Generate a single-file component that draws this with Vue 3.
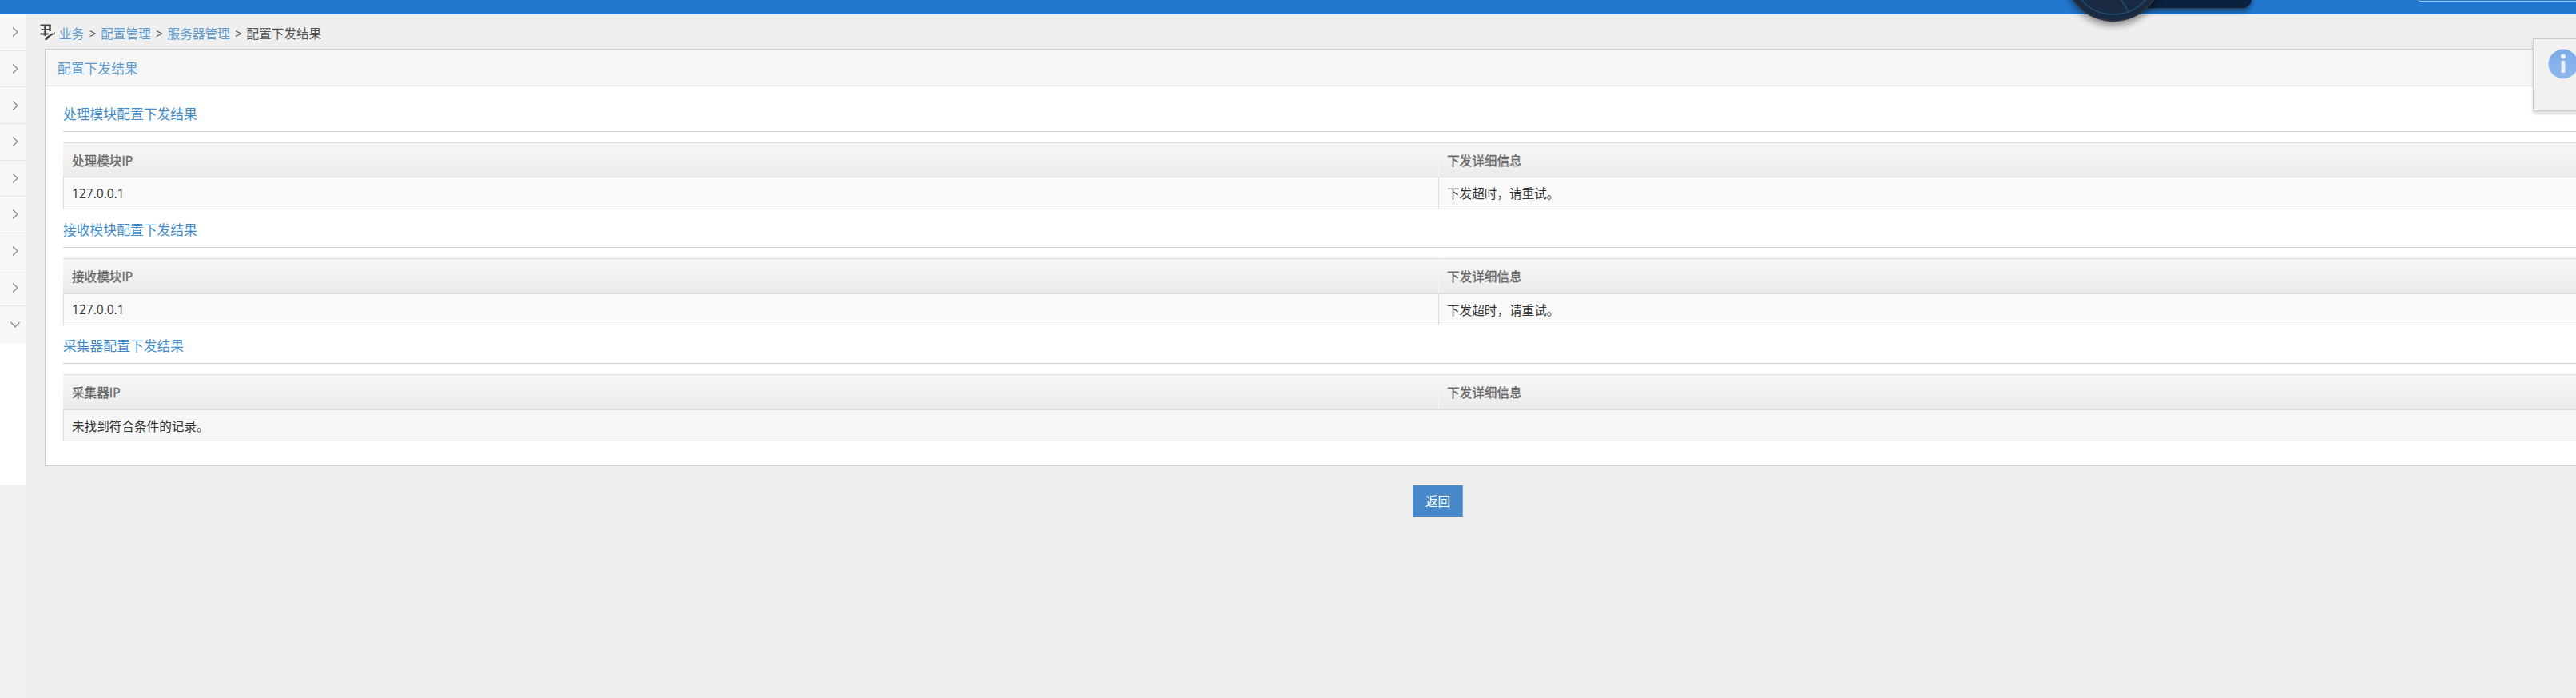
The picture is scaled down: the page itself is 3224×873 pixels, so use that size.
<script setup>
const navCount = 8
const sections = [
  { title: '处理模块配置下发结果', col: '处理模块IP', ip: '127.0.0.1', msg: '下发超时，请重试。' },
  { title: '接收模块配置下发结果', col: '接收模块IP', ip: '127.0.0.1', msg: '下发超时，请重试。', thick: true },
  { title: '采集器配置下发结果', col: '采集器IP', empty: '未找到符合条件的记录。', thick: true },
]
</script>

<template>
  <div class="page">
    <header class="topbar">
      <div class="badge-bar"></div>
      <svg class="badge" width="130" height="130" viewBox="0 0 130 130">
        <circle cx="65" cy="65" r="61" fill="#1a2a42" stroke="#2b3440" stroke-width="2" />
        <circle cx="65" cy="65" r="53" fill="none" stroke="#1f4f70" stroke-width="1.500" />
        <path d="M60 82l8 8 11 16 4 8" fill="none" stroke="#1f4f70" stroke-width="1.500" />
      </svg>
      <div class="search-edge"></div>
    </header>
    <div class="shell">
      <div class="rail">
        <aside class="side">
          <div v-for="n in navCount" :key="n" class="nav-item">
            <svg width="10" height="14" viewBox="0 0 10 14"><path d="M2 1.500 8 7l-6 5.500" fill="none" stroke="#8a8a8a" stroke-width="1.300" /></svg>
          </div>
          <div class="nav-item last">
            <svg width="14" height="10" viewBox="0 0 14 10"><path d="M1.500 2 7 8l5.500-6" fill="none" stroke="#8a8a8a" stroke-width="1.300" /></svg>
          </div>
        </aside>
      </div>
      <main class="main">
        <nav class="crumbs">
          <svg class="crumb-icon" width="19" height="20" viewBox="0 0 19 20">
            <path d="M0.500 1.500h13M1.500 7h11M0.500 12.500h10" fill="none" stroke="#444" stroke-width="2.200" />
            <path d="M6.500 1v14M12.500 1v8" fill="none" stroke="#444" stroke-width="2.400" />
            <path d="M18.500 9.500l-2 2.500-1.500-.500L7 17l-1 3 3.500-.500 1-2 6-4.500 2 .500z" fill="#444" />
          </svg>
          <a class="link">业务</a><span class="sep">&gt;</span>
          <a class="link">配置管理</a><span class="sep">&gt;</span>
          <a class="link">服务器管理</a><span class="sep">&gt;</span>
          <span class="current">配置下发结果</span>
        </nav>
        <section class="panel">
          <h2 class="panel-head">配置下发结果</h2>
          <div class="panel-body">
            <template v-for="s in sections" :key="s.title">
              <h3 class="sec-title">{{ s.title }}</h3>
              <table class="grid" :class="{ thick: s.thick }">
                <thead>
                  <tr>
                    <th>{{ s.col }}</th>
                    <th class="second">下发详细信息</th>
                  </tr>
                </thead>
                <tbody>
                  <tr v-if="s.empty">
                    <td colspan="2" class="empty">{{ s.empty }}</td>
                  </tr>
                  <tr v-else>
                    <td>{{ s.ip }}</td>
                    <td class="second">{{ s.msg }}</td>
                  </tr>
                </tbody>
              </table>
            </template>
          </div>
        </section>
        <div class="actions">
          <button class="back" type="button">返回</button>
        </div>
      </main>
    </div>
    <div class="info-pop">
      <svg width="38" height="40" viewBox="0 0 38 40">
        <defs>
          <linearGradient id="infoFill" x1="0" y1="0" x2="0" y2="1">
            <stop offset="0" stop-color="#7cabe8" />
            <stop offset="1" stop-color="#8fb6ee" />
          </linearGradient>
        </defs>
        <circle cx="19" cy="19" r="18.500" fill="url(#infoFill)" />
        <circle cx="19" cy="9.500" r="3" fill="#eef4fc" />
        <rect x="16.500" y="15" width="5" height="15" rx="1" fill="#e6effb" />
      </svg>
    </div>
  </div>
</template>

<style>
html, body { margin: 0; background: #efefef; overflow: hidden; }
</style>

<style scoped>
.page {
  position: relative;
  width: 3224px;
  height: 873px;
  overflow: hidden;
  background: #efefef;
  font-family: "Open Sans", "Noto Sans CJK SC", sans-serif;
  font-size: 15.6px;
  color: #333;
}
.topbar {
  position: relative;
  height: 18px;
  background: #2277cf;
}
.badge {
  position: absolute;
  left: 2580px;
  top: -100px;
  filter: drop-shadow(0 5px 4px rgba(0, 0, 0, 0.4));
}
.badge-bar {
  position: absolute;
  left: 2650px;
  top: -30px;
  width: 168px;
  height: 41px;
  border-radius: 12px;
  background: #0a2240;
  border-bottom: 1px solid #33404f;
  box-sizing: border-box;
  box-shadow: 0 4px 6px rgba(0, 0, 0, 0.35);
}
.search-edge {
  position: absolute;
  left: 3026px;
  top: -10px;
  width: 400px;
  height: 12px;
  border: 1px solid #9dc2ea;
  border-radius: 3px;
  box-sizing: border-box;
}
.shell { display: flex; align-items: flex-start; }
.rail {
  width: 32px;
  height: 855px;
  flex: none;
  background: #f1f1f1;
}
.side {
  height: 588px;
  background: #fff;
  border-bottom: 1px solid #ddd;
}
.nav-item {
  height: 45.625px;
  box-sizing: border-box;
  display: flex;
  align-items: center;
  justify-content: center;
  background: #f8f8f8;
  border-bottom: 1px solid #e4e4e4;
}
.nav-item svg { margin-left: 5px; }
.nav-item.last { border-bottom: 0; }
.main {
  width: 3488px;
  flex: none;
  margin-left: 24px;
}
.crumbs {
  height: 43px;
  margin-left: -6px;
  display: flex;
  align-items: center;
  line-height: 1;
  padding-top: 6px;
  box-sizing: border-box;
}
.crumb-icon { margin-right: 5px; margin-top: -6px; }
.link { color: #5b9bd1; }
.current { color: #555; }
.sep { width: 8px; margin: 0 6.500px; color: #555; text-align: center; }
.panel {
  background: #fff;
  border: 1px solid #ccc;
}
.panel-head {
  margin: 0;
  height: 46px;
  box-sizing: border-box;
  padding-left: 15px;
  display: flex;
  align-items: center;
  background: #f6f6f6;
  border-bottom: 1px solid #ddd;
  font-size: 16.8px;
  font-weight: 400;
  color: #5b9bd1;
}
.panel-body {
  padding: 9px 22px 30px;
}
.sec-title {
  margin: 0 0 13px;
  height: 48px;
  box-sizing: border-box;
  padding-top: 3px;
  display: flex;
  align-items: center;
  border-bottom: 1px solid #ccc;
  font-size: 16.8px;
  font-weight: 400;
  color: #428bca;
}
.grid {
  width: 100%;
  table-layout: fixed;
  border-collapse: separate;
  border-spacing: 0;
}
.grid th, .grid td {
  box-sizing: border-box;
  padding: 0 10px;
  text-align: left;
}
.grid th {
  height: 44px;
  background: linear-gradient(#f7f7f7, #ebebeb);
  border-top: 1px solid #ddd;
  border-bottom: 1px solid #ddd;
  color: #666;
  font-weight: 400;
  -webkit-text-stroke: 0.35px #666;
}
.grid th:first-child { padding-left: 11px; }
.grid th.second { border-left: 1px solid #f5f5f5; }
.grid td {
  height: 40px;
  background: #f9f9f9;
  border-bottom: 1px solid #ddd;
  color: #333;
}
.grid td:first-child { border-left: 1px solid #ddd; padding-left: 10px; }
.grid td.second { border-left: 1px solid #ddd; }
.grid td.empty { background: #f6f6f6; }
.grid.thick th { height: 45px; border-bottom-width: 2px; }
.grid.thick td { height: 39px; }
.actions {
  display: flex;
  justify-content: center;
  padding: 24px 1px 0 0;
}
.back {
  width: 63px;
  height: 39px;
  padding: 0;
  background: #4688c9;
  border: 0;
  border-left: 1px solid #6ea2d6;
  border-right: 1px solid #6ea2d6;
  color: #fff;
  font: inherit;
}
.info-pop {
  position: absolute;
  left: 3170px;
  top: 48px;
  width: 80px;
  height: 91px;
  box-sizing: border-box;
  padding: 12px 0 0 18px;
  background: #f1f1f1;
  border: 1px solid #ccc;
  box-shadow: 0 3px 4px rgba(0, 0, 0, 0.15);
}
</style>
